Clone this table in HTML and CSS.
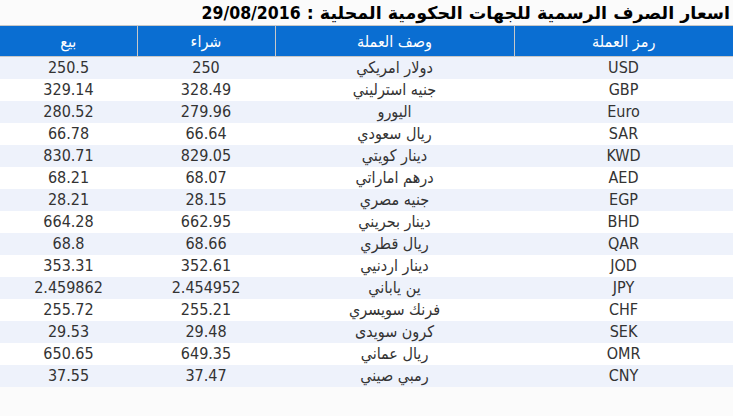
FILE: index.html
```html
<!DOCTYPE html>
<html lang="ar" dir="rtl">
<head>
<meta charset="utf-8">
<link rel="stylesheet" href="styles.css">
</head>
<body>
<div class="page">
  <div class="title">اسعار الصرف الرسمية للجهات الحكومية المحلية : <span class="date">29/08/2016</span></div>
  <table class="rates">
    <colgroup>
      <col class="c-code"><col class="c-desc"><col class="c-buy"><col class="c-sell">
    </colgroup>
    <thead>
      <tr><th>رمز العملة</th><th>وصف العملة</th><th>شراء</th><th>بيع</th></tr>
    </thead>
    <tbody>
      <tr><td>USD</td><td>دولار امريكي</td><td>250</td><td>250.5</td></tr>
      <tr><td>GBP</td><td>جنيه استرليني</td><td>328.49</td><td>329.14</td></tr>
      <tr><td>Euro</td><td>اليورو</td><td>279.96</td><td>280.52</td></tr>
      <tr><td>SAR</td><td>ريال سعودي</td><td>66.64</td><td>66.78</td></tr>
      <tr><td>KWD</td><td>دينار كويتي</td><td>829.05</td><td>830.71</td></tr>
      <tr><td>AED</td><td>درهم اماراتي</td><td>68.07</td><td>68.21</td></tr>
      <tr><td>EGP</td><td>جنيه مصري</td><td>28.15</td><td>28.21</td></tr>
      <tr><td>BHD</td><td>دينار بحريني</td><td>662.95</td><td>664.28</td></tr>
      <tr><td>QAR</td><td>ريال قطري</td><td>68.66</td><td>68.8</td></tr>
      <tr><td>JOD</td><td>دينار اردنيي</td><td>352.61</td><td>353.31</td></tr>
      <tr><td>JPY</td><td>ين ياباني</td><td>2.454952</td><td>2.459862</td></tr>
      <tr><td>CHF</td><td>فرنك سويسري</td><td>255.21</td><td>255.72</td></tr>
      <tr><td>SEK</td><td>كرون سويدى</td><td>29.48</td><td>29.53</td></tr>
      <tr><td>OMR</td><td>ريال عماني</td><td>649.35</td><td>650.65</td></tr>
      <tr><td>CNY</td><td>رمبي صيني</td><td>37.47</td><td>37.55</td></tr>
    </tbody>
  </table>
</div>
</body>
</html>
```
FILE: styles.css
```css
html, body {
  margin: 0;
  padding: 0;
  background: #fbfbfb;
}
.page {
  width: 733px;
  font-family: "DejaVu Sans", sans-serif;
  font-stretch: condensed;
  color: #333;
}
.title {
  height: 25px;
  line-height: 27px;
  padding-right: 3px;
  font-size: 17.5px;
  font-weight: bold;
  font-stretch: normal;
  color: #000;
  white-space: nowrap;
  overflow: hidden;
}
.date {
  font-stretch: condensed;
}
.rates {
  width: 733px;
  border-collapse: collapse;
  table-layout: fixed;
  font-size: 16px;
}
.c-code { width: 219px; }
.c-desc { width: 239px; }
.c-buy { width: 138px; }
.c-sell { width: 137px; }
.rates th {
  height: 30px;
  padding: 0;
  background: #0a6ed2;
  color: #fff;
  font-weight: normal;
  text-align: center;
  border: 1px solid #c8c8c8;
}
.rates th:first-child { border-right: none; }
.rates th:last-child { border-left: none; }
.rates td {
  height: 22px;
  padding: 0;
  text-align: center;
  line-height: 22px;
  white-space: nowrap;
}
.rates tbody tr:nth-child(odd) { background: #eef2fb; }
.rates tbody tr:nth-child(even) { background: #fff; }
```
